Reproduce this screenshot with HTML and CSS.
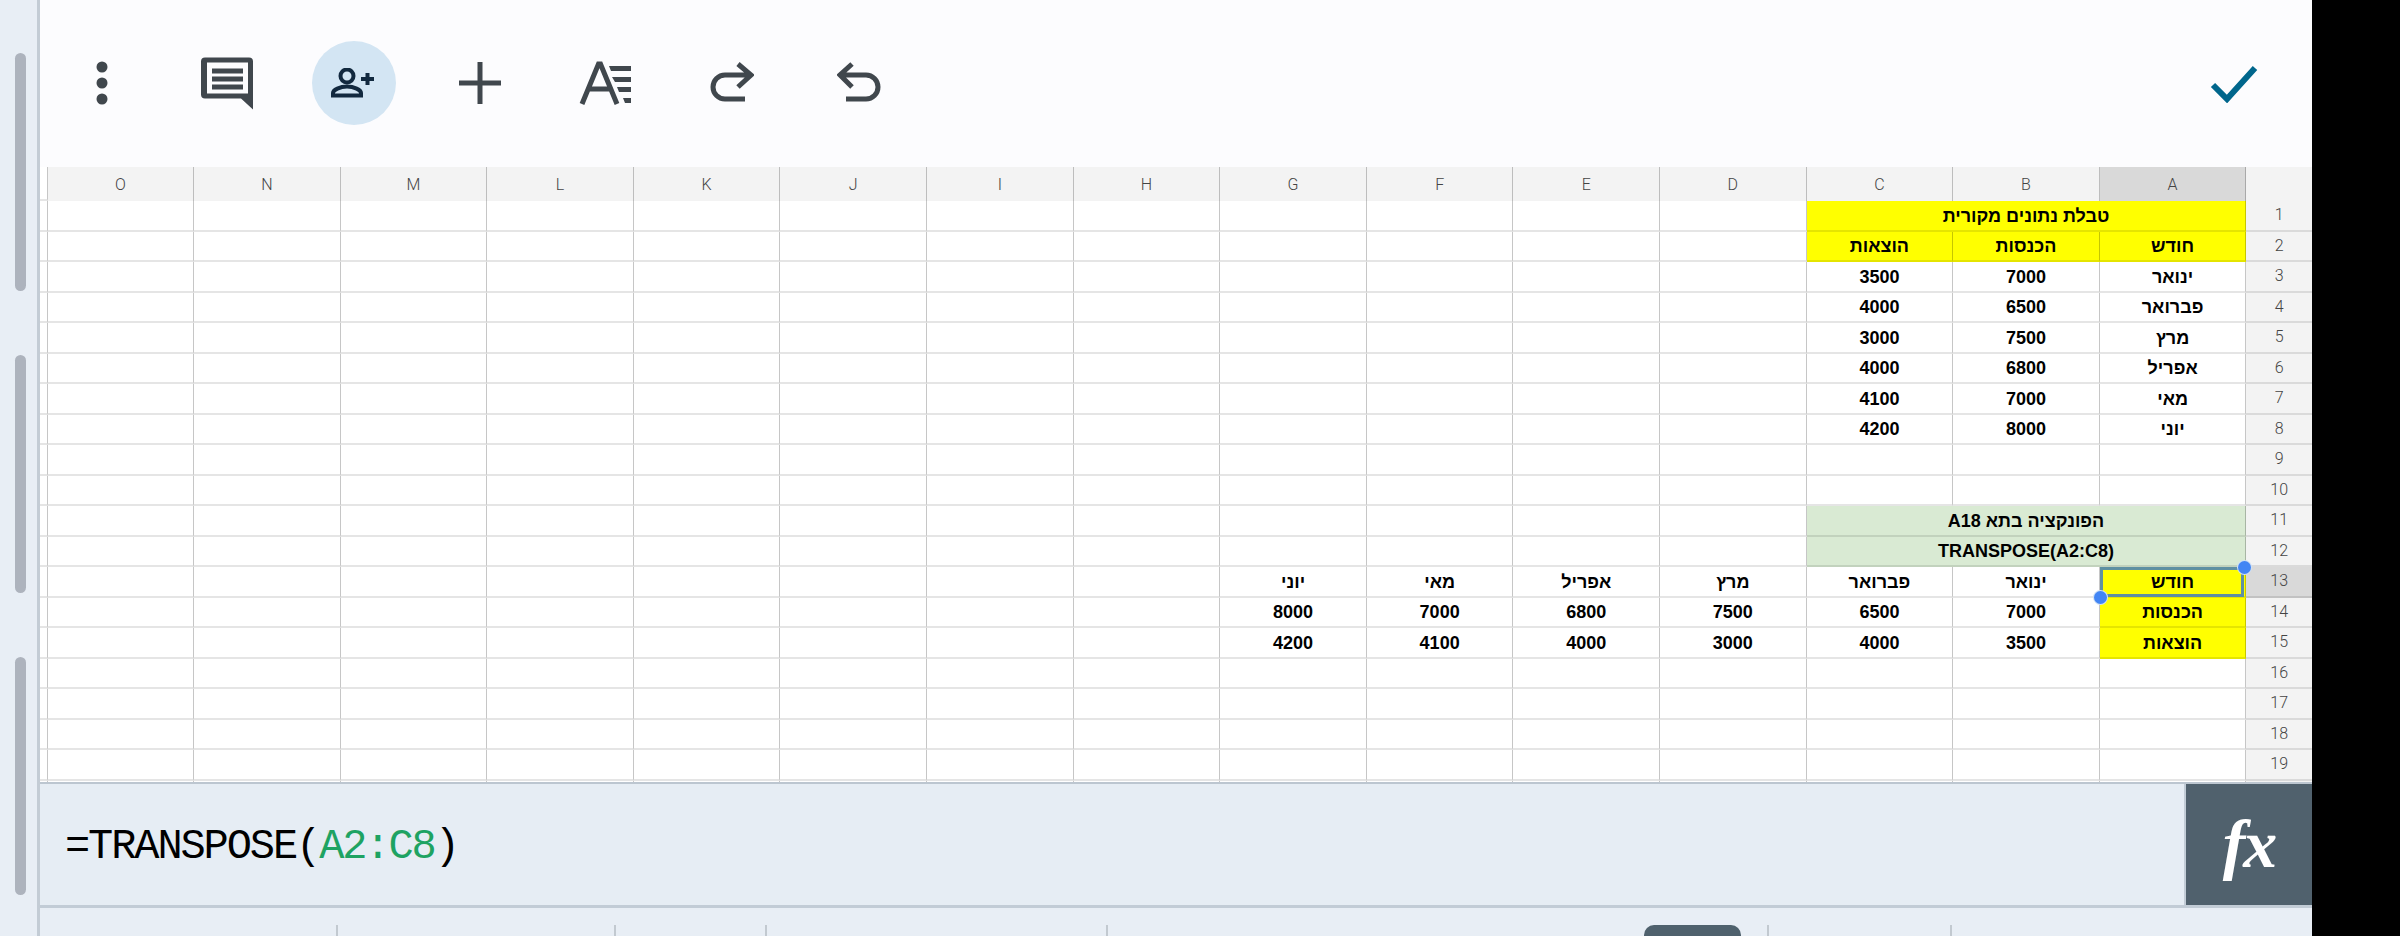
FILE: index.html
```html
<!DOCTYPE html>
<html lang="he">
<head>
<meta charset="utf-8">
<title>Sheets</title>
<link rel="stylesheet" href="styles.css">
</head>
<body>
<div class="app">
  <aside class="gutter">
    <div class="thumb"></div>
    <div class="thumb"></div>
    <div class="thumb"></div>
  </aside>
  <main class="main">
    <header class="toolbar">
      <div class="tools">
        <svg class="ic ic-dots" viewBox="0 0 12 44"><circle cx="6" cy="6" r="5.5"/><circle cx="6" cy="22" r="5.5"/><circle cx="6" cy="38" r="5.5"/></svg>
        <svg class="ic ic-comment" viewBox="0 0 54 54"><path fill-rule="evenodd" d="M5 1H49a4 4 0 0 1 4 4V53L41 42H5a4 4 0 0 1-4-4V5a4 4 0 0 1 4-4ZM7 6V37H48V6Z"/><path d="M12 12H43V17H12ZM12 20H43V25H12ZM12 28H43V33H12Z"/></svg>
        <div class="share">
          <svg class="ic-person" viewBox="0 0 46 30"><circle cx="16" cy="8" r="6.5"/><path d="M2 27.5V25c0-3 7-6.500 14-6.500S30 22 30 25v2.500Z"/><path d="M30 11H43M36.500 5V17"/></svg>
        </div>
        <svg class="ic ic-plus" viewBox="0 0 44 44"><path d="M22 1V43M1 22H43"/></svg>
        <svg class="ic ic-font" viewBox="0 0 54 44"><path class="stroke" d="M3 43 19.500 3h2L38 43M8 28H33"/><path d="M30 5H52V10H32ZM33 16H52V21H36ZM38 26H52V31H40ZM44 37H52V42H46Z"/></svg>
        <svg class="ic ic-redo" viewBox="0 0 44 44"><path d="M28 3 41 14 28 26M40 14H15a12 12 0 0 0 0 24H35"/></svg>
        <svg class="ic ic-undo" viewBox="0 0 44 44"><path d="M15 3 3 14 15 26M4 14H29a12 12 0 0 1 0 24H9"/></svg>
      </div>
      <svg class="ic-check" viewBox="0 0 48 38"><path d="M3 20 17 34 45 3"/></svg>
    </header>

    <section class="sheet">
      <div class="c"></div><div class="ch">O</div><div class="ch">N</div><div class="ch">M</div><div class="ch">L</div><div class="ch">K</div><div class="ch">J</div><div class="ch">I</div><div class="ch">H</div><div class="ch">G</div><div class="ch">F</div><div class="ch">E</div><div class="ch">D</div><div class="ch">C</div><div class="ch">B</div><div class="ch on">A</div><div class="ch end"></div>

      <div class="c"></div><div class="c"></div><div class="c"></div><div class="c"></div><div class="c"></div><div class="c"></div><div class="c"></div><div class="c"></div><div class="c"></div><div class="c"></div><div class="c"></div><div class="c"></div><div class="c"></div><div class="c span3 yellow" dir="rtl">טבלת נתונים מקורית</div><div class="rh">1</div>
      <div class="c"></div><div class="c"></div><div class="c"></div><div class="c"></div><div class="c"></div><div class="c"></div><div class="c"></div><div class="c"></div><div class="c"></div><div class="c"></div><div class="c"></div><div class="c"></div><div class="c"></div><div class="c yellow" dir="rtl">הוצאות</div><div class="c yellow" dir="rtl">הכנסות</div><div class="c yellow" dir="rtl">חודש</div><div class="rh">2</div>
      <div class="c"></div><div class="c"></div><div class="c"></div><div class="c"></div><div class="c"></div><div class="c"></div><div class="c"></div><div class="c"></div><div class="c"></div><div class="c"></div><div class="c"></div><div class="c"></div><div class="c"></div><div class="c">3500</div><div class="c">7000</div><div class="c" dir="rtl">ינואר</div><div class="rh">3</div>
      <div class="c"></div><div class="c"></div><div class="c"></div><div class="c"></div><div class="c"></div><div class="c"></div><div class="c"></div><div class="c"></div><div class="c"></div><div class="c"></div><div class="c"></div><div class="c"></div><div class="c"></div><div class="c">4000</div><div class="c">6500</div><div class="c" dir="rtl">פברואר</div><div class="rh">4</div>
      <div class="c"></div><div class="c"></div><div class="c"></div><div class="c"></div><div class="c"></div><div class="c"></div><div class="c"></div><div class="c"></div><div class="c"></div><div class="c"></div><div class="c"></div><div class="c"></div><div class="c"></div><div class="c">3000</div><div class="c">7500</div><div class="c" dir="rtl">מרץ</div><div class="rh">5</div>
      <div class="c"></div><div class="c"></div><div class="c"></div><div class="c"></div><div class="c"></div><div class="c"></div><div class="c"></div><div class="c"></div><div class="c"></div><div class="c"></div><div class="c"></div><div class="c"></div><div class="c"></div><div class="c">4000</div><div class="c">6800</div><div class="c" dir="rtl">אפריל</div><div class="rh">6</div>
      <div class="c"></div><div class="c"></div><div class="c"></div><div class="c"></div><div class="c"></div><div class="c"></div><div class="c"></div><div class="c"></div><div class="c"></div><div class="c"></div><div class="c"></div><div class="c"></div><div class="c"></div><div class="c">4100</div><div class="c">7000</div><div class="c" dir="rtl">מאי</div><div class="rh">7</div>
      <div class="c"></div><div class="c"></div><div class="c"></div><div class="c"></div><div class="c"></div><div class="c"></div><div class="c"></div><div class="c"></div><div class="c"></div><div class="c"></div><div class="c"></div><div class="c"></div><div class="c"></div><div class="c">4200</div><div class="c">8000</div><div class="c" dir="rtl">יוני</div><div class="rh">8</div>
      <div class="c"></div><div class="c"></div><div class="c"></div><div class="c"></div><div class="c"></div><div class="c"></div><div class="c"></div><div class="c"></div><div class="c"></div><div class="c"></div><div class="c"></div><div class="c"></div><div class="c"></div><div class="c"></div><div class="c"></div><div class="c"></div><div class="rh">9</div>
      <div class="c"></div><div class="c"></div><div class="c"></div><div class="c"></div><div class="c"></div><div class="c"></div><div class="c"></div><div class="c"></div><div class="c"></div><div class="c"></div><div class="c"></div><div class="c"></div><div class="c"></div><div class="c"></div><div class="c"></div><div class="c"></div><div class="rh">10</div>
      <div class="c"></div><div class="c"></div><div class="c"></div><div class="c"></div><div class="c"></div><div class="c"></div><div class="c"></div><div class="c"></div><div class="c"></div><div class="c"></div><div class="c"></div><div class="c"></div><div class="c"></div><div class="c span3 green" dir="rtl">הפונקציה בתא A18</div><div class="rh">11</div>
      <div class="c"></div><div class="c"></div><div class="c"></div><div class="c"></div><div class="c"></div><div class="c"></div><div class="c"></div><div class="c"></div><div class="c"></div><div class="c"></div><div class="c"></div><div class="c"></div><div class="c"></div><div class="c span3 green">TRANSPOSE(A2:C8)</div><div class="rh">12</div>
      <div class="c"></div><div class="c"></div><div class="c"></div><div class="c"></div><div class="c"></div><div class="c"></div><div class="c"></div><div class="c"></div><div class="c"></div><div class="c" dir="rtl">יוני</div><div class="c" dir="rtl">מאי</div><div class="c" dir="rtl">אפריל</div><div class="c" dir="rtl">מרץ</div><div class="c" dir="rtl">פברואר</div><div class="c" dir="rtl">ינואר</div><div class="c yellow selected" dir="rtl">חודש<span class="handle handle-top"></span><span class="handle handle-bottom"></span></div><div class="rh on">13</div>
      <div class="c"></div><div class="c"></div><div class="c"></div><div class="c"></div><div class="c"></div><div class="c"></div><div class="c"></div><div class="c"></div><div class="c"></div><div class="c">8000</div><div class="c">7000</div><div class="c">6800</div><div class="c">7500</div><div class="c">6500</div><div class="c">7000</div><div class="c yellow" dir="rtl">הכנסות</div><div class="rh">14</div>
      <div class="c"></div><div class="c"></div><div class="c"></div><div class="c"></div><div class="c"></div><div class="c"></div><div class="c"></div><div class="c"></div><div class="c"></div><div class="c">4200</div><div class="c">4100</div><div class="c">4000</div><div class="c">3000</div><div class="c">4000</div><div class="c">3500</div><div class="c yellow" dir="rtl">הוצאות</div><div class="rh">15</div>
      <div class="c"></div><div class="c"></div><div class="c"></div><div class="c"></div><div class="c"></div><div class="c"></div><div class="c"></div><div class="c"></div><div class="c"></div><div class="c"></div><div class="c"></div><div class="c"></div><div class="c"></div><div class="c"></div><div class="c"></div><div class="c"></div><div class="rh">16</div>
      <div class="c"></div><div class="c"></div><div class="c"></div><div class="c"></div><div class="c"></div><div class="c"></div><div class="c"></div><div class="c"></div><div class="c"></div><div class="c"></div><div class="c"></div><div class="c"></div><div class="c"></div><div class="c"></div><div class="c"></div><div class="c"></div><div class="rh">17</div>
      <div class="c"></div><div class="c"></div><div class="c"></div><div class="c"></div><div class="c"></div><div class="c"></div><div class="c"></div><div class="c"></div><div class="c"></div><div class="c"></div><div class="c"></div><div class="c"></div><div class="c"></div><div class="c"></div><div class="c"></div><div class="c"></div><div class="rh">18</div>
      <div class="c"></div><div class="c"></div><div class="c"></div><div class="c"></div><div class="c"></div><div class="c"></div><div class="c"></div><div class="c"></div><div class="c"></div><div class="c"></div><div class="c"></div><div class="c"></div><div class="c"></div><div class="c"></div><div class="c"></div><div class="c"></div><div class="rh">19</div>
      <div class="c"></div><div class="c"></div><div class="c"></div><div class="c"></div><div class="c"></div><div class="c"></div><div class="c"></div><div class="c"></div><div class="c"></div><div class="c"></div><div class="c"></div><div class="c"></div><div class="c"></div><div class="c"></div><div class="c"></div><div class="c"></div><div class="rh"></div>
    </section>

    <section class="formula">
      <div class="expr">=TRANSPOSE(<span class="ref">A2:C8</span>)</div>
      <div class="fx">fx</div>
    </section>

    <footer class="bottom">
      <div class="seg seg-a"></div>
      <div class="seg seg-b"></div>
      <div class="seg seg-c"></div>
      <div class="seg seg-d"></div>
      <div class="pill"></div>
      <div class="seg seg-e"></div>
      <div class="seg seg-f"></div>
    </footer>
  </main>
</div>
</body>
</html>
```
FILE: styles.css
```css
* { box-sizing: border-box; }
html, body { margin: 0; padding: 0; background: #000; }
body { width: 2400px; height: 936px; overflow: hidden; }

.app { display: flex; width: 2312px; height: 936px; }

.gutter {
  flex: 0 0 40px;
  display: flex;
  flex-direction: column;
  gap: 64px;
  padding: 53px 0 0 15px;
  background: #e8eef5;
  border-right: 3px solid #c3ccd5;
}
.thumb { width: 11px; height: 238px; border-radius: 6px; background: #adb3bd; }

.main { flex: 1; display: flex; flex-direction: column; min-width: 0; }

.toolbar {
  flex: 0 0 167px;
  display: flex;
  align-items: center;
  justify-content: space-between;
  padding: 0 54px 0 56px;
  background: #fcfcfe;
}
.tools { display: flex; align-items: center; margin-bottom: 2px; }

.ic { display: block; fill: #40474d; }
.ic-dots { width: 12px; height: 44px; margin-right: 91.5px; }
.ic-comment { width: 54px; height: 54px; margin: 0 0 -1px 0; transform: translateY(0.5px); }
.share {
  width: 84px;
  height: 84px;
  margin: 0 62px 0 58px;
  border-radius: 50%;
  background: #d3e5f3;
  display: flex;
  align-items: center;
  justify-content: center;
}
.ic-person { width: 46px; height: 30px; fill: none; stroke: #12293f; stroke-width: 4; }
.ic-plus, .ic-redo, .ic-undo { fill: none; stroke: #40474d; stroke-width: 5; }
.ic-plus { width: 44px; height: 44px; margin-right: 77px; }
.ic-font { width: 54px; height: 44px; margin-right: 77px; }
.ic-font .stroke { fill: none; stroke: #40474d; stroke-width: 5; }
.ic-redo { width: 44px; height: 44px; margin-right: 83px; }
.ic-undo { width: 44px; height: 44px; }
.ic-check { width: 48px; height: 38px; fill: none; stroke: #00668c; stroke-width: 6; }

.sheet {
  position: relative;
  flex: 0 0 615px;
  overflow: hidden;
  display: grid;
  grid-template-columns: 7.5px repeat(15, 146.6px) 1fr;
  grid-template-rows: 34px;
  grid-auto-rows: 30.5px;
  background: #fff;
  font: bold 18px "Liberation Sans", Arial, sans-serif;
  color: #000;
}
.c {
  position: relative;
  display: flex;
  align-items: center;
  justify-content: center;
  padding-top: 2px;
  border-right: 1px solid rgba(0, 0, 0, .22);
  border-bottom: 2px solid rgba(0, 0, 0, .1);
}
.ch {
  display: flex;
  align-items: center;
  justify-content: center;
  background: #f3f3f3;
  border-right: 1px solid rgba(0, 0, 0, .22);
  font: 300 16px Roboto, sans-serif;
  color: #444;
}
.ch.end { border-right: 0; }
.rh {
  display: flex;
  align-items: center;
  justify-content: center;
  padding-bottom: 1px;
  background: #f3f3f3;
  border-bottom: 2px solid rgba(0, 0, 0, .1);
  font: 300 16px Roboto, sans-serif;
  color: #444;
}
.on { background: #d9d9d9; }
.span3 { grid-column: span 3; }
.yellow { background: #ff0; }
.green { background: #d9ead3; }

.selected::after {
  content: "";
  position: absolute;
  left: 0;
  top: 0;
  right: 1px;
  bottom: -1px;
  border: 3px solid #5f90a2;
}
.handle {
  position: absolute;
  z-index: 2;
  width: 13px;
  height: 13px;
  border-radius: 50%;
  background: #4285f4;
  box-shadow: 0 0 0 1px #cfe0f5;
}
.handle-top { right: -6px; top: -6px; }
.handle-bottom { left: -6px; bottom: -8px; }

.formula {
  flex: 0 0 126px;
  display: flex;
  align-items: stretch;
  justify-content: space-between;
  background: #e6edf4;
  border-top: 2px solid #bcc6d0;
  border-bottom: 3px solid #c2ccd6;
}
.expr {
  align-self: center;
  padding: 5px 0 0 25px;
  font: 42px "Liberation Mono", monospace;
  letter-spacing: -2.1px;
  color: #000;
}
.ref { color: #1ea362; }
.fx {
  flex: 0 0 128px;
  display: flex;
  align-items: center;
  justify-content: center;
  background: #50616d;
  border-left: 2px solid #c2ccd6;
  color: #fff;
  font: italic bold 68px "Liberation Serif", serif;
  letter-spacing: -2px;
}

.bottom {
  flex: 1;
  display: flex;
  align-items: flex-start;
  padding-top: 17px;
  background: #e8eef5;
}
.seg { height: 12px; border-right: 2px solid #c2c9d0; }
.seg-a { width: 298px; }
.seg-b { width: 278px; }
.seg-c { width: 151px; }
.seg-d { width: 341px; }
.pill { width: 97px; height: 12px; margin-left: 536px; background: #4f616d; border-radius: 10px 10px 0 0; }
.seg-e { width: 28px; }
.seg-f { width: 183px; }
```
